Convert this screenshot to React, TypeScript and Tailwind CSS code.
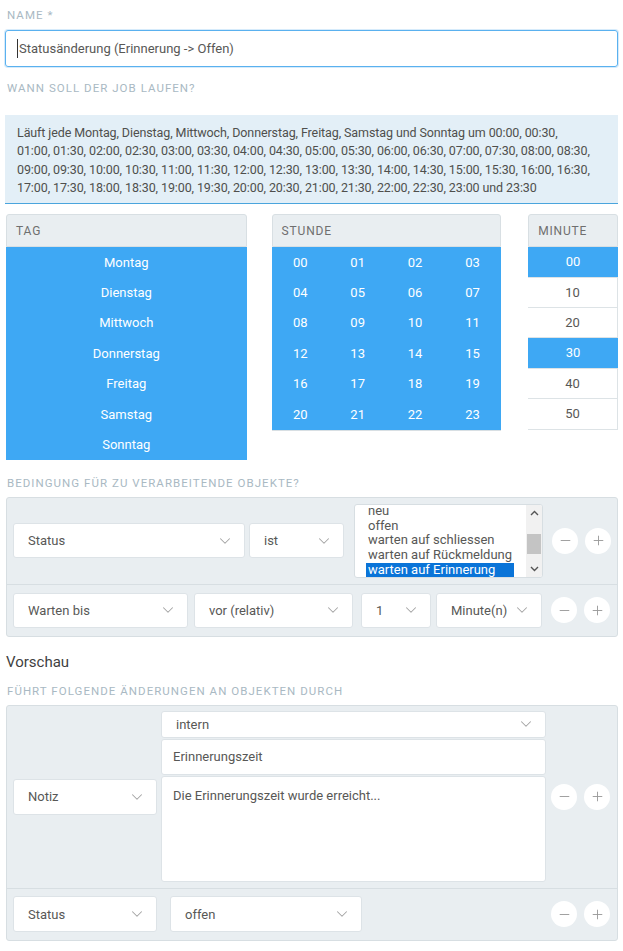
import { ChevronDown, Minus, Plus } from 'lucide-react';

const days = ['Montag', 'Dienstag', 'Mittwoch', 'Donnerstag', 'Freitag', 'Samstag', 'Sonntag'];
const hours = Array.from({ length: 24 }, (_, i) => String(i).padStart(2, '0'));
const minutes = [
  { v: '00', on: true },
  { v: '10', on: false },
  { v: '20', on: false },
  { v: '30', on: true },
  { v: '40', on: false },
  { v: '50', on: false },
];

const scheduleLines = [
  'Läuft jede Montag, Dienstag, Mittwoch, Donnerstag, Freitag, Samstag und Sonntag um 00:00, 00:30,',
  '01:00, 01:30, 02:00, 02:30, 03:00, 03:30, 04:00, 04:30, 05:00, 05:30, 06:00, 06:30, 07:00, 07:30, 08:00, 08:30,',
  '09:00, 09:30, 10:00, 10:30, 11:00, 11:30, 12:00, 12:30, 13:00, 13:30, 14:00, 14:30, 15:00, 15:30, 16:00, 16:30,',
  '17:00, 17:30, 18:00, 18:30, 19:00, 19:30, 20:00, 20:30, 21:00, 21:30, 22:00, 22:30, 23:00 und 23:30',
];

function Label({ children }: { children: React.ReactNode }) {
  return (
    <div className="text-[11.5px] leading-4 uppercase tracking-[0.09em] text-[#a9b9c3] pl-[2px]">{children}</div>
  );
}

function Select({ value, className }: { value: string; className: string }) {
  return (
    <div
      className={`flex items-center justify-between bg-white border border-[#dde3e7] rounded-[3px] pl-[14px] pr-[10px] text-[13px] text-[#585856] ${className}`}
    >
      <span>{value}</span>
      <ChevronDown size={18} strokeWidth={1.4} className="text-[#a3a3a3]" />
    </div>
  );
}

function PlusMinus() {
  return (
    <div className="flex items-center gap-[7px]">
      <div className="w-[26px] h-[26px] rounded-full bg-white flex items-center justify-center">
        <Minus size={15} strokeWidth={1.5} className="text-[#9b9b9b]" />
      </div>
      <div className="w-[26px] h-[26px] rounded-full bg-white flex items-center justify-center">
        <Plus size={15} strokeWidth={1.5} className="text-[#9b9b9b]" />
      </div>
    </div>
  );
}

function TableHead({ title }: { title: string }) {
  return (
    <div className="h-[33px] bg-[#e9eef1] border border-[#d8dfe3] rounded-t-[3px] flex items-center pl-[9px] text-[12px] uppercase tracking-[0.07em] text-[#6f6f6f]">
      {title}
    </div>
  );
}

export default function App() {
  return (
    <div className="w-[623px] bg-white font-['Roboto',sans-serif] text-[#585856] px-[5px] pt-[7px] pb-[10px]">
      <Label>Name *</Label>
      <div className="mt-[7px] h-[37px] border border-[#5ab1ef] shadow-[0_0_0_1px_rgba(90,177,239,0.25)] rounded-[3px] flex items-center pl-[12px] text-[13px] text-[#585856]">
        <span className="border-l border-[#333] pl-[1px] -ml-[1px]">Statusänderung (Erinnerung -&gt; Offen)</span>
      </div>

      <div className="mt-[13px]">
        <Label>Wann soll der Job laufen?</Label>
      </div>
      <div className="mt-[19px] bg-[#e3eff7] border-b border-[#4aa5dd] px-[12px] pt-[9px] pb-[6px] text-[12.5px] tracking-[-0.1px] leading-[18.3px] text-[#4f4f4d]">
        {scheduleLines.map((l) => (
          <div key={l} className="whitespace-nowrap">
            {l}
          </div>
        ))}
      </div>

      {/* Zeitplan */}
      <div className="mt-[10px] flex items-start">
        <div className="w-[241px] ml-[1px]">
          <TableHead title="Tag" />
          {days.map((d) => (
            <div key={d} className="h-[30.4px] bg-[#3ea8f4] text-white text-[13px] flex items-center justify-center">
              {d}
            </div>
          ))}
        </div>
        <div className="w-[230px] ml-[25px]">
          <TableHead title="Stunde" />
          <div className="grid grid-cols-4 bg-[#3ea8f4] border-b border-[#d8dfe3]">
            {hours.map((h) => (
              <div key={h} className="h-[30.4px] text-white text-[13px] flex items-center justify-center">
                {h}
              </div>
            ))}
          </div>
        </div>
        <div className="w-[90px] ml-[27px]">
          <TableHead title="Minute" />
          {minutes.map((m) => (
            <div
              key={m.v}
              className={`h-[30.4px] border-b border-[#dde3e6] text-[13px] flex items-center justify-center ${
                m.on ? 'bg-[#3ea8f4] text-white' : 'bg-white text-[#585856] border-r border-r-[#dde3e6]'
              }`}
            >
              {m.v}
            </div>
          ))}
        </div>
      </div>

      <div className="mt-[15px]">
        <Label>Bedingung für zu verarbeitende Objekte?</Label>
      </div>
      <div className="mt-[6px] ml-[1px] w-[612px] bg-[#e9eef1] border border-[#d7dee2] rounded-[3px]">
        <div className="h-[87px] flex items-center pl-[6px] border-b border-[#d7dee2]">
          <Select value="Status" className="w-[232px] h-[35px]" />
          <Select value="ist" className="w-[95px] h-[35px] ml-[4px]" />
          <div className="ml-[10px] w-[189px] h-[74px] bg-white border border-[#d7dee2] rounded-[3px] flex overflow-hidden">
            <div className="flex-1 overflow-hidden pl-[11px]">
              <div className="flex flex-col w-max -mt-[1px] text-[13px] leading-[14.7px] text-[#585856]">
                <div className="px-[2px]">neu</div>
                <div className="px-[2px]">offen</div>
                <div className="px-[2px]">warten auf schliessen</div>
                <div className="px-[2px]">warten auf Rückmeldung</div>
                <div className="px-[2px] bg-[#0a74d8] text-white">warten auf Erinnerung</div>
              </div>
            </div>
            <div className="w-[16px] bg-[#f1f1f1] flex flex-col items-center justify-between py-[2px]">
              <svg width="9" height="6" viewBox="0 0 9 6" className="mt-[3px]">
                <path d="M1 5 L4.5 1.5 L8 5" stroke="#555" strokeWidth="1.4" fill="none" />
              </svg>
              <div className="w-[14px] h-[20px] bg-[#c4c4c4] mt-[6px]" />
              <svg width="9" height="6" viewBox="0 0 9 6" className="mb-[3px]">
                <path d="M1 1 L4.5 4.5 L8 1" stroke="#555" strokeWidth="1.4" fill="none" />
              </svg>
            </div>
          </div>
          <div className="ml-[9px]">
            <PlusMinus />
          </div>
        </div>
        <div className="h-[51px] flex items-center pl-[6px]">
          <Select value="Warten bis" className="w-[175px] h-[35px]" />
          <Select value="vor (relativ)" className="w-[159px] h-[35px] ml-[6px]" />
          <Select value="1" className="w-[70px] h-[35px] ml-[8px]" />
          <Select value="Minute(n)" className="w-[106px] h-[35px] ml-[5px]" />
          <div className="ml-[9px]">
            <PlusMinus />
          </div>
        </div>
      </div>

      <div className="mt-[15px] pl-[1px] text-[15px] leading-5 text-[#3f3f3f]">Vorschau</div>
      <div className="mt-[11px]">
        <Label>Führt folgende Änderungen an Objekten durch</Label>
      </div>
      <div className="mt-[6px] ml-[1px] w-[612px] bg-[#e9eef1] border border-[#d7dee2] rounded-[3px]">
        <div className="h-[183px] flex items-center pl-[6px] border-b border-[#d7dee2]">
          <Select value="Notiz" className="w-[144px] h-[36px]" />
          <div className="ml-[4px] w-[385px] flex flex-col gap-[1px] self-start pt-[5px]">
            <Select value="intern" className="h-[27px] pl-[11px]" />
            <div className="h-[36px] bg-white border border-[#dde3e7] rounded-[3px] flex items-center pl-[11px] text-[13px]">
              Erinnerungszeit
            </div>
            <div className="h-[106px] bg-white border border-[#dde3e7] rounded-[3px] pl-[11px] pt-[9px] text-[13px] leading-5">
              Die Erinnerungszeit wurde erreicht...
            </div>
          </div>
          <div className="ml-[5px]">
            <PlusMinus />
          </div>
        </div>
        <div className="h-[51px] flex items-center pl-[6px]">
          <Select value="Status" className="w-[144px] h-[36px]" />
          <Select value="offen" className="w-[192px] h-[36px] ml-[13px]" />
          <div className="ml-[189px]">
            <PlusMinus />
          </div>
        </div>
      </div>
    </div>
  );
}
